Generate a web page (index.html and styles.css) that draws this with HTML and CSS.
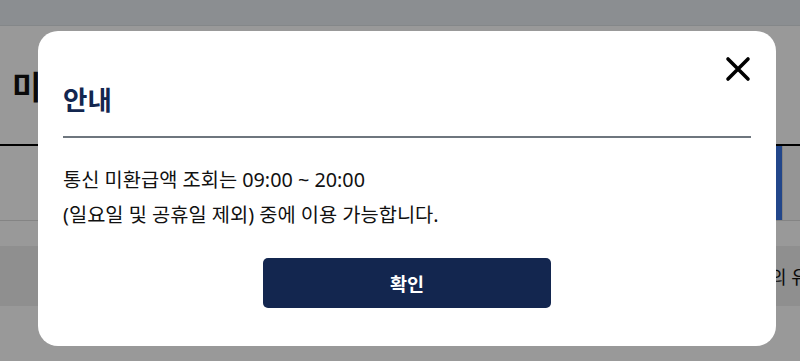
FILE: index.html
```html
<!DOCTYPE html>
<html lang="ko">
<head>
    <meta charset="UTF-8">
    <meta name="viewport" content="width=device-width, initial-scale=1.0">
    <title>통신 미환급액 조회</title>
    <link rel="stylesheet" href="styles.css">
</head>
<body>
    <div class="page">
        <header class="top-bar"></header>
        <div class="page-title">
            <h1>미환급액 조회</h1>
        </div>
        <div class="tabs">
            <div class="tab-space"></div>
            <div class="tab active"></div>
            <div class="tab"></div>
        </div>
        <div class="notice-band">
            <p>※ 통신 미환급액 조회 서비스 이용 시의 유의사항</p>
        </div>
    </div>

    <div class="overlay">
        <div class="modal" role="dialog" aria-labelledby="modal-title">
            <button type="button" class="close-btn" aria-label="닫기">
                <svg width="26" height="26" viewBox="0 0 26 26">
                    <path d="M3 3 L23 23 M23 3 L3 23" stroke="#000" stroke-width="3.6" stroke-linecap="round" fill="none"/>
                </svg>
            </button>
            <h2 id="modal-title">안내</h2>
            <div class="modal-body">
                <p>통신 미환급액 조회는 09:00 ~ 20:00</p>
                <p>(일요일 및 공휴일 제외) 중에 이용 가능합니다.</p>
            </div>
            <div class="modal-actions">
                <button type="button" class="confirm-btn">확인</button>
            </div>
        </div>
    </div>
</body>
</html>
```

FILE: styles.css
```css
:root {
    --navy: #13264f;
    --divider: #6e767e;
    --text: #111;
}

* { box-sizing: border-box; }
body { margin: 0; font-family: "Noto Sans", "Noto Sans CJK KR", sans-serif; color: var(--text); background: #fff; overflow: hidden; }

/* page behind the dialog */
.page { height: 361px; }
.top-bar { height: 26px; background: #e8edf2; border-bottom: 1px solid #dde1e5; }
.page-title { height: 118px; padding: 39px 0 0 12px; }
.page-title h1 { margin: 0; font-size: 32px; line-height: 44px; font-weight: 700; white-space: nowrap; }
.tabs { display: flex; height: 77px; border-top: 2px solid #000; border-bottom: 1px solid #ddd; }
.tab-space { flex: 0 0 776px; }
.tab { flex: 1; border-left: 1px solid #ddd; background: #f8f8f8; }
.tab.active { flex: 0 0 6px; background: #3a76e6; border: none; }
.notice-band { margin-top: 25px; height: 60px; background: #eee; display: flex; align-items: center; padding-left: 495px; overflow: hidden; }
.notice-band p { margin: 0; font-size: 18px; white-space: nowrap; }

/* dialog */
.overlay { position: fixed; inset: 0; background: rgba(0, 0, 0, 0.4); }
.modal { position: absolute; left: 38px; top: 31px; width: 738px; height: 315px; background: #fff; border-radius: 20px; padding: 50px 25px 38px; }
.close-btn { position: absolute; top: 25px; right: 25px; width: 26px; height: 26px; padding: 0; border: none; background: none; cursor: pointer; }
.close-btn svg { display: block; }
.modal h2 { margin: 0; padding-bottom: 16px; border-bottom: 2px solid var(--divider); font-size: 26.5px; line-height: 39px; font-weight: 700; color: var(--navy); }
.modal-body { margin-top: 24px; font-size: 19.8px; line-height: 35px; }
.modal-body p { margin: 0; }
.modal-actions { display: flex; justify-content: center; margin-top: 26px; }
.confirm-btn { width: 288px; height: 50px; border: none; border-radius: 5px; background: var(--navy); color: #fff; font-family: inherit; font-size: 18.5px; font-weight: 700; cursor: pointer; }
```
